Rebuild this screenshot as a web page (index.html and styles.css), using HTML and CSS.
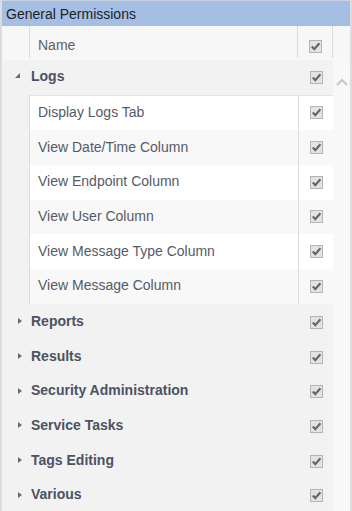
FILE: index.html
```html
<!DOCTYPE html>
<html lang="en">

<head>
    <meta charset="UTF-8">
    <title>General Permissions</title>
    <link rel="stylesheet" href="styles.css">
</head>

<body>
    <div class="panel">
        <div class="panel-title">General Permissions</div>

        <div class="grid-head">
            <div class="gutter"></div>
            <div class="col-name">Name</div>
            <div class="col-check"><span class="cb"></span></div>
            <div class="col-rest"></div>
        </div>

        <div class="grid-body">
            <div class="rows">
                <div class="group open">
                    <span class="toggle"></span>
                    <span class="group-name">Logs</span>
                    <span class="col-check"><span class="cb"></span></span>
                </div>
                <div class="children">
                    <div class="child"><span class="child-name">Display Logs Tab</span><span class="col-check"><span class="cb"></span></span></div>
                    <div class="child"><span class="child-name">View Date/Time Column</span><span class="col-check"><span class="cb"></span></span></div>
                    <div class="child"><span class="child-name">View Endpoint Column</span><span class="col-check"><span class="cb"></span></span></div>
                    <div class="child"><span class="child-name">View User Column</span><span class="col-check"><span class="cb"></span></span></div>
                    <div class="child"><span class="child-name">View Message Type Column</span><span class="col-check"><span class="cb"></span></span></div>
                    <div class="child"><span class="child-name">View Message Column</span><span class="col-check"><span class="cb"></span></span></div>
                </div>
                <div class="group">
                    <span class="toggle"></span>
                    <span class="group-name">Reports</span>
                    <span class="col-check"><span class="cb"></span></span>
                </div>
                <div class="group">
                    <span class="toggle"></span>
                    <span class="group-name">Results</span>
                    <span class="col-check"><span class="cb"></span></span>
                </div>
                <div class="group">
                    <span class="toggle"></span>
                    <span class="group-name">Security Administration</span>
                    <span class="col-check"><span class="cb"></span></span>
                </div>
                <div class="group">
                    <span class="toggle"></span>
                    <span class="group-name">Service Tasks</span>
                    <span class="col-check"><span class="cb"></span></span>
                </div>
                <div class="group">
                    <span class="toggle"></span>
                    <span class="group-name">Tags Editing</span>
                    <span class="col-check"><span class="cb"></span></span>
                </div>
                <div class="group">
                    <span class="toggle"></span>
                    <span class="group-name">Various</span>
                    <span class="col-check"><span class="cb"></span></span>
                </div>
            </div>
            <div class="scrollbar">
                <svg class="scroll-up" width="12" height="8" viewBox="0 0 12 8">
                    <path d="M1 7 L6 2 L11 7" fill="none" stroke="#c8c8c8" stroke-width="2"/>
                </svg>
            </div>
        </div>
    </div>
</body>

</html>
```

FILE: styles.css
```css
html,
body {
    margin: 0;
    background: #fff;
    font-family: 'Liberation Sans', Arial, sans-serif;
    font-size: 14px;
}

.panel {
    width: 352px;
    height: 511px;
    overflow: hidden;
    box-sizing: border-box;
    background: #f2f2f2;
    border-left: 2px solid #dcdcdc;
    border-right: 2px solid #dcdcdc;
}

.panel-title {
    height: 26px;
    box-sizing: border-box;
    margin: 0 -2px;
    padding: 5px 0 0 6px;
    background: #a4bee4;
    border-top: 1px solid #c9d3e0;
    color: #1f1f1f;
}

.grid-head {
    display: flex;
    height: 34px;
    background: #f7f7f7;
}

.grid-head .gutter {
    width: 27px;
    border-right: 1px solid #dcdcdc;
    margin-bottom: 2px;
}

.grid-head .col-name {
    width: 268px;
    padding: 11px 0 0 8px;
    box-sizing: border-box;
    color: #5a5f68;
    border-right: 1px solid #dcdcdc;
    margin-bottom: 2px;
}

.grid-head .col-check {
    border-right: 1px solid #dcdcdc;
    padding-top: 8px;
    margin-bottom: 2px;
}

.grid-head .col-rest {
    flex: 1;
}

.col-check {
    width: 34px;
    display: flex;
    align-items: center;
    justify-content: center;
    flex-shrink: 0;
}

.cb {
    width: 11px;
    height: 11px;
    border: 1px solid #b4b4b4;
    background: #e3e3e3 url("data:image/svg+xml,%3Csvg xmlns='http://www.w3.org/2000/svg' viewBox='0 0 11 11'%3E%3Cpath d='M1.8 5.6 L4.3 8.2 L9.4 2.2' fill='none' stroke='%23666' stroke-width='2.2'/%3E%3C/svg%3E") no-repeat center;
    display: block;
}

.grid-body {
    display: flex;
}

.rows {
    width: 331px;
}

.scrollbar {
    flex: 1;
    background: #f8f8f8;
    height: 460px;
}

.scroll-up {
    display: block;
    margin: 18px 0 0 3px;
}

.group {
    display: flex;
    align-items: center;
    height: 34.67px;
}

.toggle {
    width: 29px;
    height: 100%;
    position: relative;
    flex-shrink: 0;
}

.toggle::after {
    content: "";
    position: absolute;
    left: 16px;
    top: 13px;
    border-left: 4px solid #6b6b6b;
    border-top: 3.5px solid transparent;
    border-bottom: 3.5px solid transparent;
}

.group.open .toggle::after {
    left: 13px;
    top: 13px;
    border-left: 5px solid transparent;
    border-top: none;
    border-bottom: 5px solid #6b6b6b;
}

.group-name {
    flex: 1;
    font-weight: bold;
    color: #4b5263;
    padding-bottom: 3px;
}

.children {
    margin: 0 0 1.7px 27px;
    border-top: 1px solid #e4e4e4;
    border-left: 1px solid #dcdcdc;
}

.child {
    display: flex;
    align-items: center;
    height: 34.67px;
    background: #fff;
}

.child:nth-child(even) {
    background: #f8f8f8;
}

.child-name {
    flex: 1;
    padding: 0 0 2px 8px;
    color: #555b66;
    align-self: stretch;
    display: flex;
    align-items: center;
    border-right: 1px solid #dcdcdc;
}

.child .col-check {
    width: 34px;
}
```
